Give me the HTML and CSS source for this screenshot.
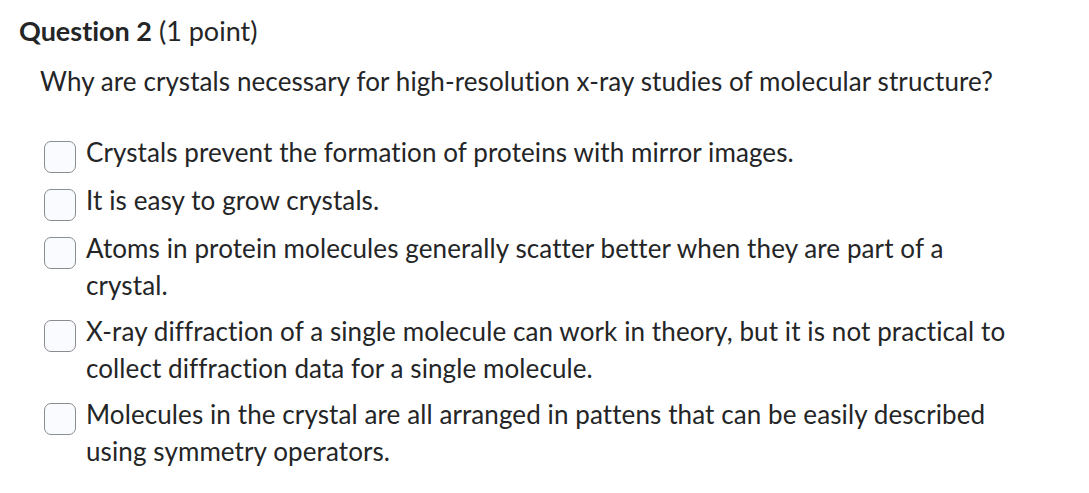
FILE: index.html
```html
<!DOCTYPE html>
<html>
<head>
<meta charset="utf-8">
<link rel="stylesheet" href="styles.css">
</head>
<body>
<div class="question">
  <h2 class="q-title"><strong>Question 2</strong> (1 point)</h2>
  <p class="q-text">Why are crystals necessary for high-resolution x-ray studies of molecular structure?</p>
  <ul class="options">
    <li class="option"><span class="box"></span><span class="label">Crystals prevent the formation of proteins with mirror images.</span></li>
    <li class="option"><span class="box"></span><span class="label">It is easy to grow crystals.</span></li>
    <li class="option"><span class="box"></span><span class="label">Atoms in protein molecules generally scatter better when they are part of a crystal.</span></li>
    <li class="option"><span class="box"></span><span class="label">X-ray diffraction of a single molecule can work in theory, but it is not practical to collect diffraction data for a single molecule.</span></li>
    <li class="option"><span class="box"></span><span class="label">Molecules in the crystal are all arranged in pattens that can be easily described using symmetry operators.</span></li>
  </ul>
</div>
</body>
</html>
```

FILE: styles.css
```css
html, body {
  margin: 0;
  padding: 0;
  background: #ffffff;
}
body {
  font-family: Lato, "Noto Sans", sans-serif;
  color: #242526;
  font-variant-ligatures: none;
  letter-spacing: 0.1px;
}
.question {
  padding: 12px 0 0 19px;
  width: 1050px;
}
.q-title {
  margin: 0;
  font-size: 27px;
  font-weight: 400;
  line-height: 37px;
  letter-spacing: 0;
}
.q-title strong {
  font-weight: 700;
}
.q-text {
  margin: 14px 0 0 21px;
  font-size: 26px;
  line-height: 37px;
}
.options {
  list-style: none;
  margin: 34px 0 0 25px;
  padding: 0;
  display: flex;
  flex-direction: column;
  gap: 9px;
}
.option {
  display: flex;
  align-items: flex-start;
  gap: 10px;
  font-size: 26px;
  line-height: 37px;
}
.box {
  flex: none;
  box-sizing: border-box;
  width: 32px;
  height: 32px;
  margin-top: 7px;
  border: 1px solid #8a8d90;
  border-radius: 7px;
  background: #f9fbff;
}
.label {
  flex: none;
  width: 930px;
}
```
